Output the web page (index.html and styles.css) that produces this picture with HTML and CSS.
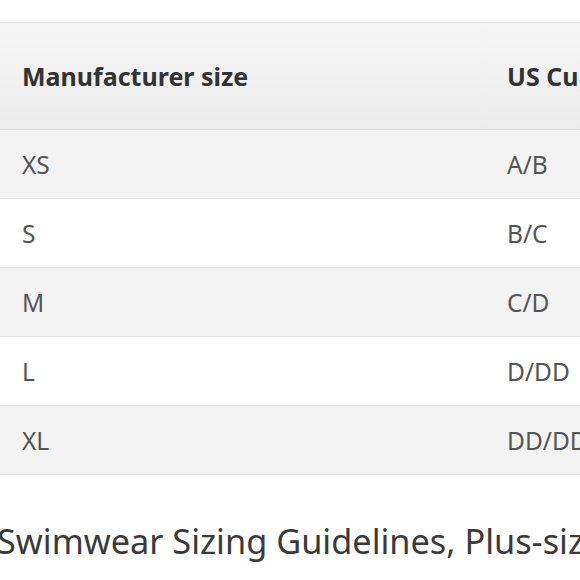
FILE: index.html
```html
<!DOCTYPE html>
<html>
<head>
<meta charset="utf-8">
<link rel="stylesheet" href="styles.css">
</head>
<body>
<div class="page">
  <table class="size-table">
    <thead>
      <tr>
        <th class="col-a">Manufacturer size</th>
        <th class="col-b">US Cup Size</th>
      </tr>
    </thead>
    <tbody>
      <tr class="alt"><td>XS</td><td>A/B</td></tr>
      <tr><td>S</td><td>B/C</td></tr>
      <tr class="alt"><td>M</td><td>C/D</td></tr>
      <tr><td>L</td><td>D/DD</td></tr>
      <tr class="alt"><td>XL</td><td>DD/DDD</td></tr>
    </tbody>
  </table>
  <h2 class="caption">Swimwear Sizing Guidelines, Plus-size</h2>
</div>
</body>
</html>
```
FILE: styles.css
```css
html, body {
  margin: 0;
  padding: 0;
  background: #ffffff;
  overflow: hidden;
}
.page {
  width: 580px;
  height: 580px;
  overflow: hidden;
  padding-top: 22px;
  box-sizing: border-box;
  font-family: "Noto Sans", "Open Sans", sans-serif;
}
.size-table {
  border-collapse: collapse;
  width: 900px;
  table-layout: fixed;
}
.size-table th,
.size-table td {
  text-align: left;
  padding: 0 0 0 22px;
  white-space: nowrap;
  overflow: visible;
}
.col-a { width: 463px; }
.size-table th {
  height: 106px;
  font-size: 25px;
  font-weight: 700;
  color: #333333;
  background: linear-gradient(#f6f6f6, #ececec);
  border-top: 1px solid #e4e4e4;
  border-bottom: 1px solid #dcdcdc;
}
.size-table td {
  height: 68px;
  font-size: 24.5px;
  color: #555555;
  border-bottom: 1px solid #e4e4e4;
}
.size-table tr.alt td {
  background: #f3f3f3;
}
.caption {
  margin: 42px 0 0 -3px;
  font-size: 34.3px;
  line-height: normal;
  font-weight: 400;
  color: #3a3a3a;
  white-space: nowrap;
}
```
